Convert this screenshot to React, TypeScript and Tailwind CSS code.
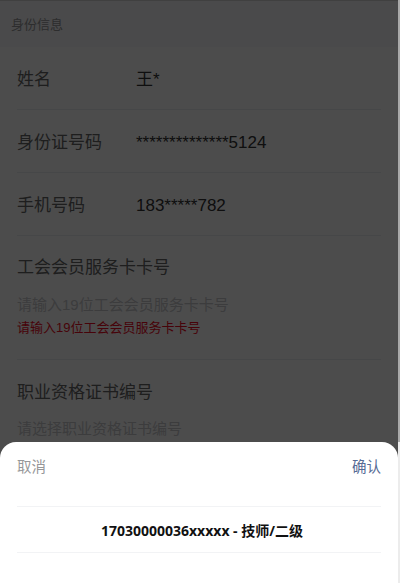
import React from "react";

const sans = { fontFamily: '"Liberation Sans", Arial, "Noto Sans CJK SC", sans-serif' };

function Row({ label, value }: { label: string; value: string }) {
  return (
    <div className="flex h-[63px] items-center border-b border-[#ebedf0] pt-[4px]">
      <div className="w-[119px] text-[17px] text-[#646566]">{label}</div>
      <div className="text-[17px] text-[#323233]">{value}</div>
    </div>
  );
}

export default function App() {
  return (
    <div className="flex h-[583px] w-[400px] overflow-hidden bg-white" style={sans}>
      <div className="relative h-[583px] w-[398px]">
        <div className="h-[1px] bg-[#d8d8d8]" />
        <div className="flex h-[46px] items-center bg-[#f7f8fa] px-[11px] pt-[1px] text-[13px] text-[#969799]">
          身份信息
        </div>
        <div className="bg-white px-[17px]">
          <Row label="姓名" value="王*" />
          <Row label="身份证号码" value="**************5124" />
          <Row label="手机号码" value="183*****782" />
          <div className="flex h-[124px] flex-col border-b border-[#ebedf0] pt-[20px]">
            <div className="text-[17px] leading-[24px] text-[#646566]">工会会员服务卡卡号</div>
            <div className="mt-[14px] text-[15px] leading-[22px] text-[#c8c9cc]">
              请输入19位工会会员服务卡卡号
            </div>
            <div className="mt-[3px] text-[13px] leading-[18px] text-[#ee0a24]">
              请输入19位工会会员服务卡卡号
            </div>
          </div>
          <div className="flex flex-col pt-[21px]">
            <div className="text-[17px] leading-[24px] text-[#646566]">职业资格证书编号</div>
            <div className="mt-[13px] text-[15px] leading-[22px] text-[#c8c9cc]">
              请选择职业资格证书编号
            </div>
          </div>
        </div>

        <div className="absolute inset-0 bg-black/70" />

        <div className="absolute bottom-0 left-0 right-0 h-[141px] rounded-t-[16px] bg-white">
          <div className="flex h-[50px] items-center justify-between px-[17px] pt-[1px] text-[14.5px]">
            <span className="text-[#969799]">取消</span>
            <span className="text-[#576b95]">确认</span>
          </div>
          <div className="mx-[17px] mt-[14px] flex h-[47px] items-center justify-center border-y border-[#f2f3f5] pt-[2px]">
            <span
              className="ml-[6px] text-[14px] font-bold text-[#111]"
              style={{ fontFamily: '"Open Sans", "Noto Sans CJK SC", sans-serif' }}
            >
              17030000036xxxxx - 技师/二级
            </span>
          </div>
        </div>
      </div>
      <div className="flex w-[2px] flex-col">
        <div className="h-[442px] bg-[#a9a9a9]" />
        <div className="flex-1 bg-[#ececec]" />
      </div>
    </div>
  );
}
